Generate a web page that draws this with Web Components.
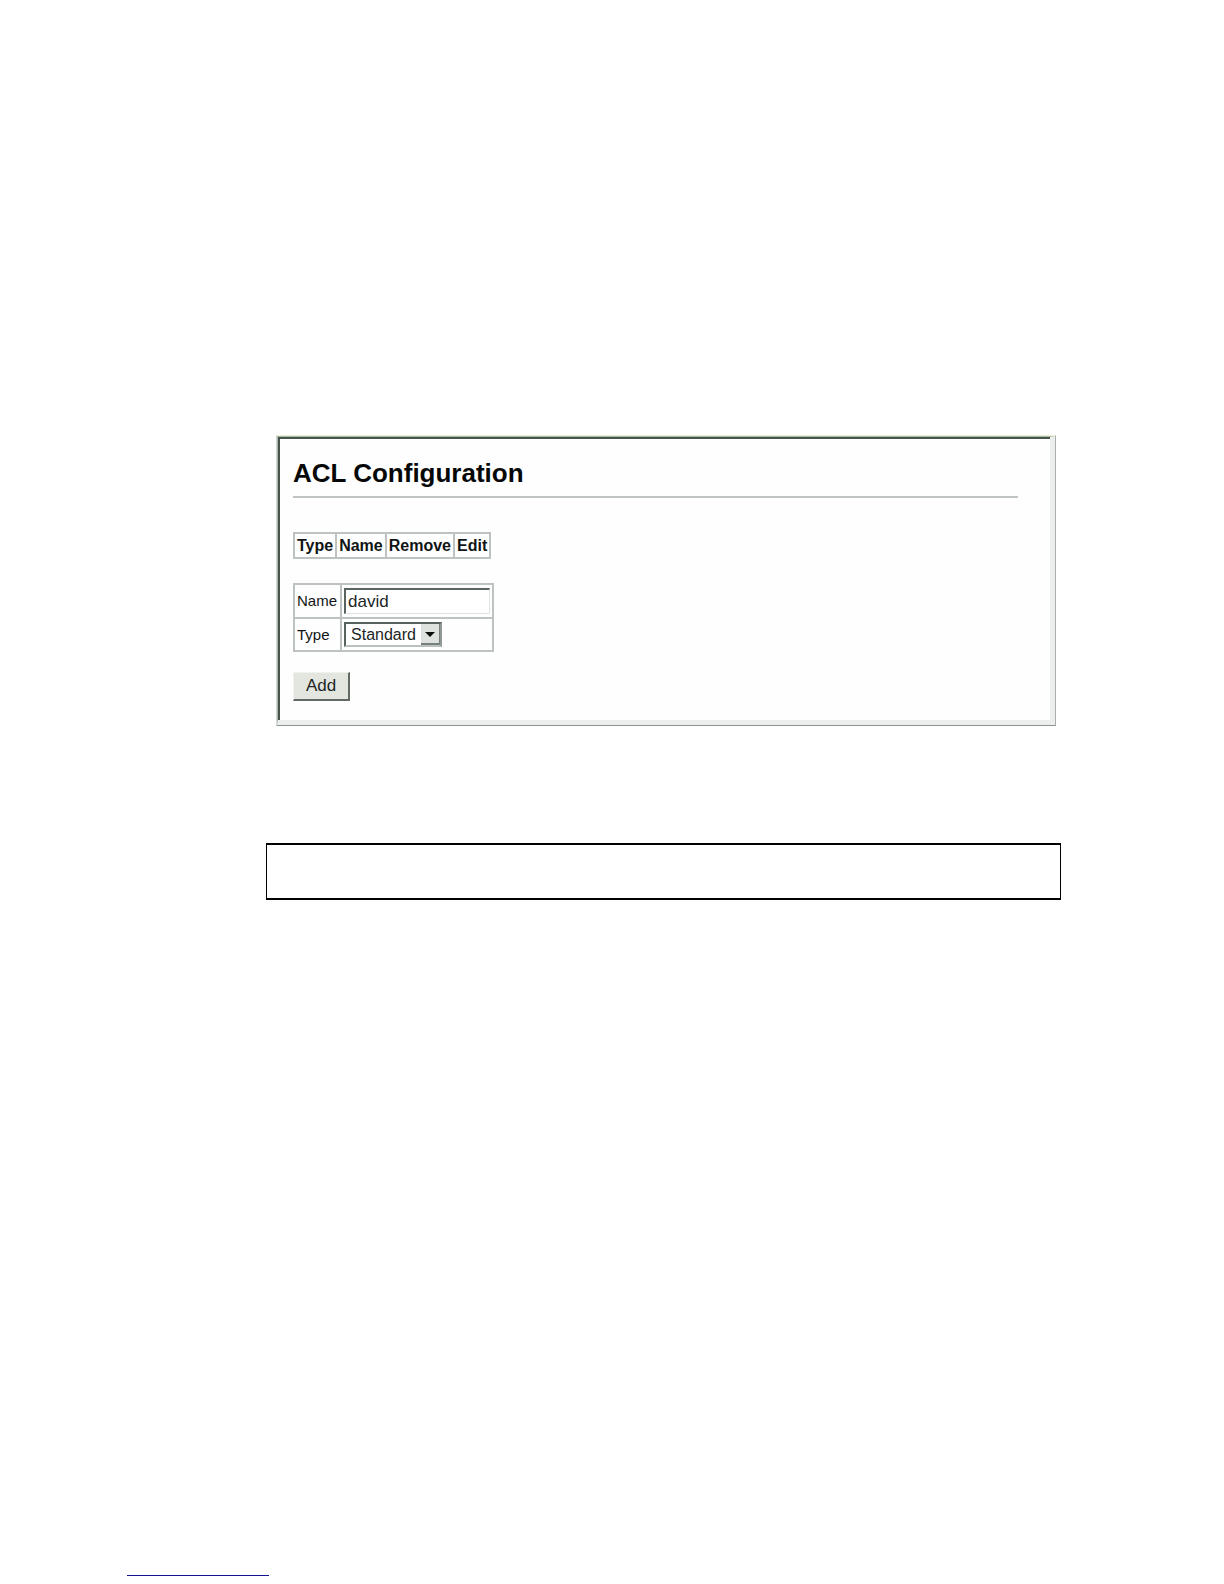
<!DOCTYPE html>
<html lang="en">
<head>
<meta charset="utf-8">
<title>ACL Configuration</title>
<style>
html, body { margin: 0; background: #fff; }
body { font: 16px/20px "Liberation Sans", Arial, sans-serif; color: #101414; }
</style>
</head>
<body>
<manual-page>
  <config-panel>
    <span slot="title">ACL Configuration</span>
    <acl-list></acl-list>
    <acl-form></acl-form>
  </config-panel>
  <note-box></note-box>
  <page-link slot="footer"></page-link>
</manual-page>
<script>
function define(name, markup) {
  customElements.define(name, class extends HTMLElement {
    constructor() {
      super();
      this.attachShadow({ mode: "open" }).innerHTML = markup;
    }
  });
}

define("manual-page", `
<style>
:host { display: flex; flex-direction: column; min-height: 100vh; box-sizing: border-box; padding: 435px 163px 8px 127px; }
main { display: flex; flex-direction: column; gap: 117px; padding-left: 139px; }
footer { margin-top: auto; }
</style>
<main><slot></slot></main>
<footer><slot name="footer"></slot></footer>`);

define("config-panel", `
<style>
:host { display: block; margin: 0 5px 0 10px; border: 1px solid; border-color: #eef0d4 #a9adad #8b9090 #d3dad6; }
.bevel { border: solid; border-width: 1px 5px 5px 1px; border-color: #a9b9a3 #eceeee #eceeee #a9b5ae; }
.face { border: solid #46544c; border-width: 2px 0 0 2px; background: #fefefe; padding: 19px 32px 19px 13px; }
h1 { margin: 0; font-size: 26px; line-height: 30px; font-weight: bold; color: #060808; }
hr { margin: 8px 0 34px; border: 0; height: 2px; background: #c1c4c4; }
.body { display: flex; flex-direction: column; align-items: flex-start; gap: 24px; }
</style>
<section class="bevel"><div class="face">
<h1><slot name="title"></slot></h1><hr>
<div class="body"><slot></slot></div>
</div></section>`);

define("acl-list", `
<style>
:host { display: block; }
table { border-collapse: collapse; border: 2px solid #bcc3c1; }
th { border: 2px solid #bcc3c1; height: 25px; box-sizing: border-box; padding: 1px 2px; line-height: 21px; font-weight: bold; }
</style>
<table><thead><tr><th scope="col">Type</th><th scope="col">Name</th><th scope="col">Remove</th><th scope="col">Edit</th></tr></thead></table>`);

define("acl-form", `
<style>
:host { display: block; }
form { display: flex; flex-direction: column; align-items: flex-start; gap: 20px; margin: 0; }
table { border-collapse: collapse; }
td { border: 2px solid #bcc3c1; padding: 3px 2px; font-size: 15px; line-height: 20px; }
td:first-child { padding-right: 3px; }
input, select, button { font-family: inherit; color: #202626; box-sizing: border-box; margin: 0; border-radius: 0; outline: 0; }
input { display: block; width: 146px; height: 26px; padding: 0 2px; font-size: 17px; background: #fff; border: solid; border-width: 2px 1px 1px 2px; border-color: #59635f #dfe4e2 #dfe4e2 #59635f; }
.pick { display: grid; width: 98px; height: 25px; box-sizing: border-box; border: 2px solid #59635f; border-right-color: #8e9894; border-bottom-color: #b9c2be; }
.pick > * { grid-area: 1 / 1; }
select { appearance: none; width: 100%; height: 21px; padding: 0 0 0 5px; border: 0; font-size: 16px; background: #fff; }
.arrow { justify-self: end; pointer-events: none; width: 19px; height: 21px; box-sizing: border-box; background: #dde2df; border-right: 1px solid #77807c; border-bottom: 2px solid #77807c; }
svg { display: block; }
button { width: 57px; height: 29px; padding: 0; font-size: 17px; background: #e3e5df; border: solid; border-width: 1px 2px 2px 1px; border-color: #f0f2ee #626a66 #626a66 #f0f2ee; }
</style>
<form onsubmit="return false">
<table>
<tr><td><label for="name">Name</label></td><td><input id="name" type="text" value="david"></td></tr>
<tr><td><label for="type">Type</label></td><td><div class="pick"><select id="type"><option>Standard</option></select><span class="arrow"><svg width="18" height="19" viewBox="0 0 18 19" aria-hidden="true"><path d="M4 8h10l-5 5z" fill="#080c0a"/></svg></span></div></td></tr>
</table>
<button type="submit">Add</button>
</form>`);

define("note-box", `
<style>
:host { display: block; height: 53px; border: solid #000; border-width: 2px 1px; }
</style>
<slot></slot>`);

define("page-link", `
<style>
:host { display: block; }
a { display: block; width: 142px; height: 24px; border-bottom: 1px solid #14148c; }
</style>
<a href="#" aria-label="Home"></a>`);
</script>
</body>
</html>
